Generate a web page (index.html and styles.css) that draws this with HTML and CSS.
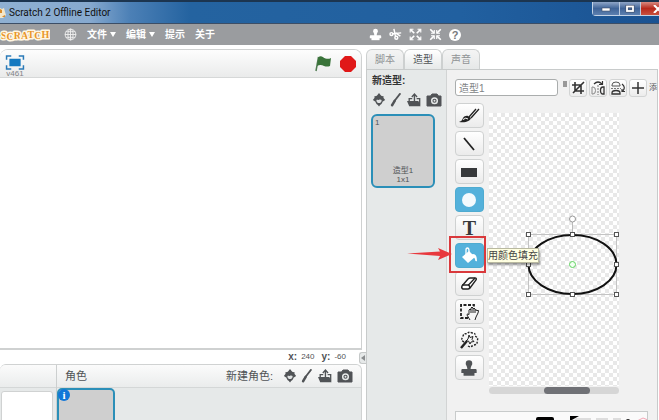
FILE: index.html
```html
<!DOCTYPE html>
<html lang="zh-CN">

<head>
    <meta charset="UTF-8">
    <meta name="viewport" content="width=device-width, initial-scale=1.0">
    <title>Scratch 2 Offline Editor</title>
    <link rel="stylesheet" href="styles.css">
</head>

<body>
    <!-- Icons used more than once -->
    <svg class="defs" aria-hidden="true">
        <symbol id="icon-sprite" viewBox="0 0 14 16">
            <path d="M7 0l2.500 3 3 1-.5 1.500L14 8l-3 2C10.500 12 9.500 13 8.500 13.500L7 15.500l-1.500-2C4.500 13 3.500 12 3 10L0 8l2-2.500L1.500 4l3-1z" fill="#505356"/>
            <path d="M4 8c1.500-.5 2 .3 3-.3s2-.5 3 .3c0 2.500-1.200 3.500-3 3.500S4.200 10.500 4 8z" fill="#dfe2e3"/>
        </symbol>
        <symbol id="icon-paint" viewBox="0 0 12 16">
            <path d="M10.500 1L4 9.500" stroke="#505356" stroke-width="2" stroke-linecap="round"/>
            <path d="M4.500 9L1.500 14" stroke="#505356" stroke-width="2.800" stroke-linecap="round"/>
        </symbol>
        <symbol id="icon-upload" viewBox="0 0 16 16">
            <path d="M8.500 9V2M5.500 4.500l3-3.200 3 3.200" fill="none" stroke="#505356" stroke-width="1.600"/>
            <path d="M2.500 9V6.500H6M11 6.500h3.500V14" fill="none" stroke="#505356" stroke-width="1.500"/>
            <path d="M0 9h13l2.500 6H2.500z" fill="#505356"/>
        </symbol>
        <symbol id="icon-camera" viewBox="0 0 16 14">
            <path d="M1 3h3.500L6 1h5l1.500 2H15v10H1z" fill="#505356" stroke="#505356" stroke-linejoin="round"/>
            <circle cx="8.500" cy="7.800" r="2.800" fill="#505356" stroke="#e6e9e9" stroke-width="1.500"/>
            <circle cx="8.500" cy="7.800" r="1" fill="#e6e9e9"/>
        </symbol>
        <symbol id="icon-stamp" viewBox="0 0 16 16">
            <path d="M8 1a3 3 0 0 1 3 3c0 1.500-1.500 2-1.500 5H14q1 0 1 1v2.500H1V10q0-1 1-1h4.500c0-3-1.500-3.500-1.500-5a3 3 0 0 1 3-3z"/>
            <path d="M3 12h10v3H3z"/>
        </symbol>
    </svg>

    <header class="title-bar">
        <svg class="app-icon" viewBox="0 0 6 12">
            <path d="M0 1l2 1 2-1 1 4 1 3-3 3H0z" fill="#f5e6c8"/>
            <path d="M0 2l2 1v3H0zM3 9l2-1v2H2z" fill="#d98b2b"/>
        </svg>
        <span class="window-title">Scratch 2 Offline Editor</span>
        <div class="window-buttons">
            <button class="win-btn" aria-label="Minimize"><svg viewBox="0 0 10 8"><rect x="1" y="3" width="8" height="3" fill="#fff" stroke="#43506a" stroke-width=".6"/></svg></button>
            <button class="win-btn" aria-label="Maximize"><svg viewBox="0 0 10 8"><rect x="2" y="1.500" width="6" height="4.500" fill="none" stroke="#43506a" stroke-width="3"/><rect x="2" y="1.500" width="6" height="4.500" fill="none" stroke="#fff" stroke-width="1.800"/></svg></button>
            <button class="win-btn close" aria-label="Close"><svg viewBox="0 0 10 8"><path d="M1 0l8 8M9 0L1 8" stroke="#fff" stroke-width="2"/></svg></button>
        </div>
    </header>

    <nav class="menu-bar">
        <svg class="logo" viewBox="0 0 50 20" role="img" aria-label="Scratch">
            <text x="1" y="14" dy="0 1 -1 0 -1 1 -1">SCRATCH</text>
        </svg>
        <button class="menu globe" aria-label="Language">
            <svg viewBox="0 0 14 14" fill="none" stroke="#eee">
                <circle cx="7" cy="7" r="5.800"/>
                <ellipse cx="7" cy="7" rx="2.800" ry="5.800"/>
                <path d="M7 1v12M1 7h12M2 4h10M2 10h10"/>
            </svg>
        </button>
        <button class="menu">文件<span class="caret"></span></button>
        <button class="menu">编辑<span class="caret"></span></button>
        <button class="menu">提示</button>
        <button class="menu">关于</button>
        <div class="cursor-tools">
            <button aria-label="Duplicate"><svg viewBox="0 0 16 16" fill="#fff"><use href="#icon-stamp"/></svg></button>
            <button aria-label="Delete"><svg viewBox="0 0 16 16" fill="none" stroke="#fff" stroke-width="1.800"><path d="M6 1l2 9M4 7l11-1"/><circle cx="3" cy="7.500" r="1.800"/><circle cx="9" cy="12" r="1.800"/><path d="M8 6l6 4"/></svg></button>
            <button aria-label="Grow"><svg viewBox="0 0 16 16" fill="none" stroke="#fff" stroke-width="2"><path d="M6.500 6.500L2 2M9.500 6.500L14 2M6.500 9.500L2 14M9.500 9.500L14 14"/><path d="M1.500 5.500v-4h4M10.500 1.500h4v4M1.500 10.500v4h4M10.500 14.500h4v-4" stroke-width="1.400"/></svg></button>
            <button aria-label="Shrink"><svg viewBox="0 0 16 16" fill="none" stroke="#fff" stroke-width="2"><path d="M6 6L1.500 1.500M10 6l4.500-4.500M6 10l-4.500 4.500M10 10l4.500 4.500"/><path d="M2.500 6.500h4v-4M9.500 2.500v4h4M2.500 9.500h4v4M9.500 13.500v-4h4" stroke-width="1.400"/></svg></button>
            <button class="help" aria-label="Help">?</button>
        </div>
    </nav>

    <main class="workspace">
        <div class="left-column">
            <section class="stage">
                <div class="stage-header">
                    <button class="fullscreen">
                        <svg viewBox="0 0 20 16">
                            <path d="M1 5V1h5M14 1h5v4M19 11v4h-5M6 15H1v-4" fill="none" stroke="#2a7ab8" stroke-width="1.600"/>
                            <rect x="4" y="4" width="12" height="8" fill="#1378c0"/>
                        </svg>
                        <span>v461</span>
                    </button>
                    <button class="flag" aria-label="Go">
                        <svg viewBox="0 0 18 18">
                            <path d="M3.500 2L1 16" stroke="#4d7a50" stroke-width="1.500"/>
                            <path d="M3.500 2c3-2 5 1 7 1.500S14 4 16 3l-1 8c-2 .8-4 .8-6 0s-4-1.500-7 0z" fill="#397339"/>
                        </svg>
                    </button>
                    <button class="stop" aria-label="Stop">
                        <svg viewBox="0 0 16 16"><path d="M5 0h6l5 5v6l-5 5H5l-5-5V5z" fill="#e01818"/></svg>
                    </button>
                </div>
                <div class="stage-canvas"></div>
            </section>
            <div class="mouse-pos">
                <b>x:</b><span>240</span><b>y:</b><span>-60</span>
            </div>
            <section class="sprites">
                <div class="backdrop-column">
                    <div class="pane-header"></div>
                    <div class="backdrop-thumb"></div>
                </div>
                <div class="sprite-column">
                    <div class="pane-header">
                        <span>角色</span>
                        <span class="new-label">新建角色:</span>
                        <div class="new-buttons">
                            <button aria-label="从角色库中选取"><svg class="w14"><use href="#icon-sprite"/></svg></button>
                            <button aria-label="绘制新角色"><svg class="w12"><use href="#icon-paint"/></svg></button>
                            <button aria-label="上传角色"><svg class="w16"><use href="#icon-upload"/></svg></button>
                            <button aria-label="拍摄照片"><svg class="w16"><use href="#icon-camera"/></svg></button>
                        </div>
                    </div>
                    <div class="sprite-thumb">
                        <button class="info" aria-label="信息">i</button>
                    </div>
                </div>
            </section>
        </div>

        <div class="divider">
            <button class="collapse" aria-label="收起"></button>
        </div>

        <div class="right-column">
            <div class="tabs">
                <button class="tab">脚本</button>
                <button class="tab active">造型</button>
                <button class="tab">声音</button>
            </div>
            <div class="panel">
                <aside class="costumes">
                    <h2>新造型:</h2>
                    <div class="new-buttons">
                        <button aria-label="从造型库中选取"><svg class="w14"><use href="#icon-sprite"/></svg></button>
                        <button aria-label="绘制新造型"><svg class="w12"><use href="#icon-paint"/></svg></button>
                        <button aria-label="上传造型"><svg class="w16"><use href="#icon-upload"/></svg></button>
                        <button aria-label="拍摄照片"><svg class="w16"><use href="#icon-camera"/></svg></button>
                    </div>
                    <div class="costume">
                        <span class="index">1</span>
                        <span class="name">造型1</span>
                        <span class="size">1x1</span>
                    </div>
                </aside>

                <section class="editor">
                    <div class="editor-top">
                        <input class="costume-name" type="text" value="造型1" aria-label="造型名称">
                        <div class="undo-stub"></div>
                        <button class="edit-btn" aria-label="裁剪"><svg viewBox="0 0 16 16" fill="none" stroke="#333" stroke-width="1.600"><path d="M5 2v9h9M2 5h9v9M3 13L14 2"/></svg></button>
                        <button class="edit-btn" aria-label="左右翻转"><svg viewBox="0 0 16 16" fill="none" stroke="#333"><path d="M2 7h1q2.500 0 2.500 3.500T3 14H2z" stroke="#888"/><path d="M8 5v10" stroke="#777" stroke-dasharray="2 1"/><path d="M14 7h-1q-2.500 0-2.500 3.500T13 14h1z" stroke-width="1.300"/><path d="M4 4q4-4 8 0M12.500 1v3.500H9" stroke-width="1.200"/></svg></button>
                        <button class="edit-btn" aria-label="上下翻转"><svg viewBox="0 0 16 16" fill="none" stroke="#333"><path d="M2 6V5q0-3 4-3t4 3v1z" stroke="#555"/><path d="M1 8.500h10" stroke="#777" stroke-dasharray="2 1"/><path d="M2 14v-1q0-2.500 4-2.500t4 2.500v1z" stroke-width="1.300"/><path d="M12 4q4 3 1 7M15 11.500h-3V9" stroke-width="1.200"/></svg></button>
                        <button class="edit-btn" aria-label="设置造型中心"><svg viewBox="0 0 16 16" stroke="#333" stroke-width="1.500"><path d="M8 2v12M2 8h12"/></svg></button>
                        <button class="add-btn">添</button>
                    </div>

                    <div class="paint-area">
                        <div class="tools">
                            <button class="tool" aria-label="画笔"><svg viewBox="0 0 24 20"><path d="M19 3l-7 8M22 3l-8 9" stroke="#222" stroke-width="1.300"/><path d="M11 10l3 2c-1 3-5 5-12 4 3-1 3-2 4-4 1-1.500 3-2.500 5-2z" fill="#222"/><path d="M6 13.500q3-2.500 5-.5" stroke="#fff" fill="none"/></svg></button>
                            <button class="tool" aria-label="线段"><svg viewBox="0 0 24 20"><path d="M7 4l10 12" stroke="#222" stroke-width="1.800"/></svg></button>
                            <button class="tool" aria-label="矩形"><svg viewBox="0 0 24 20"><rect x="4" y="6" width="16" height="9" fill="#37393b"/></svg></button>
                            <button class="tool selected" aria-label="椭圆"><svg viewBox="0 0 24 20"><circle cx="12" cy="10" r="7" fill="#f4fafd"/></svg></button>
                            <button class="tool text-tool" aria-label="文本">T</button>
                            <div class="tool-hint">
                                <button class="tool selected" aria-describedby="fill-tip" aria-label="用颜色填充"><svg viewBox="0 0 24 20"><path d="M5 11l7-6 6 6-7 6z" fill="#fff"/><path d="M9 9V4q0-2 1.500-2T12 5v3" fill="none" stroke="#fff" stroke-width="1.300"/><path d="M15 8q5-1 5 7-2 1-2-2l-2-3z" fill="#fff"/></svg></button>
                                <div class="marker"></div>
                                <svg class="arrow" viewBox="0 0 46 14"><path d="M0 6.500l33-2-2-3.500 14 6-14 6 2-4z" fill="#e8383d"/></svg>
                                <div class="tooltip" id="fill-tip" role="tooltip">用颜色填充</div>
                            </div>
                            <button class="tool" aria-label="擦除"><svg viewBox="0 0 24 20"><path d="M5 12l6-7q1-1 2-1h5q2 0 1 2l-6 8q-1 1-2 1H6q-2-1-1-3z" fill="#fff" stroke="#222" stroke-width="1.400"/><path d="M5 11h6q2 0 1.500 3.500M11.500 11L18 4" fill="none" stroke="#222" stroke-width="1.300"/></svg></button>
                            <button class="tool" aria-label="选择"><svg viewBox="0 0 24 20" fill="none" stroke="#222"><path d="M11 16H4V3h13v3" stroke-width="1.800" stroke-dasharray="3 1.500"/><path d="M13 18l-3-5q0-2 2-.5V8q1-2 2 0V6q1-2 2 0v1q1-2 2 0v1q1.500-1 2 1l1-1q1 0 0 3l-2 4-1 3" fill="#f5f5f5"/><path d="M14 8v3M16 7v4M18 8v3"/></svg></button>
                            <button class="tool" aria-label="移除背景"><svg viewBox="0 0 24 20" fill="none" stroke="#222"><path d="M7 12q-4-2-1-5 0-4 4-3 2-3 5-1 4 0 3 3 4 2 2 5 1 4-4 4-2 3-5 1" stroke-width="1.400" stroke-dasharray="2 1.300"/><path d="M4 18l6-7" stroke-width="2.400"/><path d="M12 5l1 2.500 3-1-1 3 2 2-3 .5-1 2-1.500-3-2.500 0 2-2z"/></svg></button>
                            <button class="tool" aria-label="复制"><svg viewBox="0 0 16 16" fill="#505356"><use href="#icon-stamp" x="1" y="1" width="14" height="14"/></svg></button>
                        </div>
                        <div class="canvas-column">
                            <div class="canvas">
                                <svg class="selection" viewBox="0 0 96 86" fill="none">
                                    <path d="M48.500 8v13" stroke="#bbb"/>
                                    <rect x="4.500" y="20.500" width="88" height="60" stroke="#c4c4c4"/>
                                    <ellipse cx="48.500" cy="50.500" rx="44" ry="29.500" stroke="#111" stroke-width="2"/>
                                    <circle cx="48.500" cy="5" r="3" fill="#fff" stroke="#999"/>
                                    <circle cx="48.500" cy="50.500" r="3" fill="#f3fff3" stroke="#5fd35f"/>
                                    <g fill="#fff" stroke="#555">
                                        <rect x="2.500" y="18.500" width="4" height="4"/>
                                        <rect x="46.500" y="18.500" width="4" height="4"/>
                                        <rect x="90.500" y="18.500" width="4" height="4"/>
                                        <rect x="2.500" y="48.500" width="4" height="4"/>
                                        <rect x="90.500" y="48.500" width="4" height="4"/>
                                        <rect x="2.500" y="78.500" width="4" height="4"/>
                                        <rect x="46.500" y="78.500" width="4" height="4"/>
                                        <rect x="90.500" y="78.500" width="4" height="4"/>
                                    </g>
                                </svg>
                            </div>
                            <div class="scrollbar"><div class="thumb"></div></div>
                        </div>
                    </div>

                    <div class="palette">
                        <svg viewBox="0 0 194 9">
                            <path d="M80 9V7q0-2 2-2h14q2 0 2 2v2z" fill="#000"/>
                            <path d="M114 4h9l-9 5z" fill="#000"/>
                            <path d="M119 7h16M140 7h12M157 7h8" stroke="#ddd" stroke-width="2"/>
                            <path d="M169 9q3-4 6 0z" fill="#222"/>
                            <path d="M181 9l6-3 5 2" stroke="#f3a5b5" fill="none"/>
                        </svg>
                    </div>
                </section>
            </div>
        </div>
    </main>
</body>

</html>
```

FILE: styles.css
```css
* {
    box-sizing: border-box;
}

body {
    margin: 0;
    height: 100vh;
    display: flex;
    flex-direction: column;
    overflow: hidden;
    background: #fff;
    color: #505356;
    font: 11px/16px "Liberation Sans", "Noto Sans CJK SC", sans-serif;
}

button {
    display: flex;
    align-items: center;
    justify-content: center;
    padding: 0;
    border: 0;
    background: none;
    color: inherit;
    font: inherit;
}

svg {
    display: block;
    flex: none;
}

.defs {
    position: absolute;
    width: 0;
    height: 0;
}

/* Window title */
.title-bar {
    flex: none;
    display: flex;
    align-items: center;
    gap: 3px;
    height: 24px;
    border-top: 2px solid #1c3550;
    border-bottom: 1px solid #3c4e66;
    background: linear-gradient(90deg, #8fb0d2 0, #86a9cf 90px, #4c80b6 130px, #2463a0 190px, #2160a0 70%, #1a5292 100%);
}

.app-icon {
    width: 6px;
    height: 12px;
}

.window-title {
    flex: 1;
    color: #111;
    font: 10px/16px Roboto, sans-serif;
}

.window-buttons {
    align-self: flex-start;
    display: flex;
    margin-right: -16px;
    border: 1px solid #c3d3e6;
    border-top: 0;
    border-radius: 0 0 4px 4px;
}

.win-btn {
    width: 21px;
    height: 13px;
    border-right: 1px solid #bccbe0;
    background: linear-gradient(#8fa6c8, #3f6498 50%, #5d80b0);
}

.win-btn:first-child {
    width: 27px;
}

.win-btn.close {
    width: 33px;
    border-right: 0;
    background: linear-gradient(#d88a80, #b8291c 50%, #c9513f);
}

.win-btn svg {
    width: 10px;
    height: 8px;
}

/* Menu */
.menu-bar {
    flex: none;
    display: flex;
    align-items: center;
    height: 21px;
    background: #9a9c9f;
    color: #fff;
}

.logo {
    width: 50px;
    height: 20px;
}

.logo text {
    fill: #e8962a;
    stroke: #fff6e2;
    stroke-width: 3px;
    stroke-linejoin: round;
    paint-order: stroke;
    font: bold 10px "Liberation Serif", serif;
}

.menu {
    gap: 3px;
    margin-right: 10px;
    font-weight: bold;
    font-size: 10px;
}

.menu.globe {
    margin: 0 10px 0 14px;
}

.globe svg {
    width: 13px;
    height: 13px;
}

.caret {
    border: 3px solid transparent;
    border-top: 5px solid #fff;
    border-bottom: 0;
}

.cursor-tools {
    display: flex;
    align-items: center;
    gap: 7px;
    margin-left: 144px;
}

.cursor-tools svg {
    width: 13px;
    height: 13px;
}

.help {
    width: 12px;
    height: 12px;
    border-radius: 50%;
    background: #fff;
    color: #77797c;
    font-weight: bold;
    line-height: 12px;
}

/* Workspace */
.workspace {
    flex: 1;
    min-height: 0;
    display: flex;
    padding-top: 4px;
}

.left-column {
    flex: 21 1 0;
    display: flex;
    flex-direction: column;
}

.stage {
    flex: 1;
    display: flex;
    flex-direction: column;
    border: 1px solid #cfd1d1;
    border-left: 0;
    border-bottom-width: 2px;
    border-radius: 8px 8px 0 0;
    overflow: hidden;
}

.stage-header {
    display: flex;
    align-items: center;
    height: 28px;
    padding: 0 5px;
    border-bottom: 1px solid #d6d8d8;
    background: linear-gradient(#fdfdfd, #eaebeb);
}

.fullscreen {
    flex-direction: column;
    padding-top: 5px;
    color: #808386;
    font-size: 8px;
    line-height: 8px;
}

.fullscreen svg {
    width: 20px;
    height: 15px;
}

.flag {
    margin-left: auto;
    margin-right: 7px;
}

.flag svg {
    width: 18px;
    height: 18px;
}

.stop svg {
    width: 16px;
    height: 16px;
}

.stage-canvas {
    flex: 1;
    background: #fff;
}

.mouse-pos {
    display: flex;
    justify-content: flex-end;
    gap: 4px;
    padding-right: 16px;
    font-size: 8px;
    line-height: 14px;
}

.mouse-pos b {
    font-size: 10px;
    margin-left: 3px;
}

.sprites {
    flex: none;
    display: flex;
    height: 56px;
    border: 1px solid #d0d2d2;
    border-width: 1px 1px 0 0;
    border-radius: 6px 6px 0 0;
    background: #e6e9e9;
    overflow: hidden;
}

.backdrop-column {
    flex: none;
    width: 57px;
    border-right: 1px solid #cccfcf;
}

.pane-header {
    display: flex;
    align-items: center;
    height: 23px;
    padding: 0 8px;
    border-bottom: 1px solid #d4d7d7;
    background: linear-gradient(#fbfbfb, #eaecec);
}

.backdrop-thumb {
    height: 40px;
    margin: 3px 3px 0 1px;
    border: 1px solid #d0d2d2;
    border-radius: 3px;
    background: #fff;
}

.sprite-column {
    flex: 1;
}

.new-label {
    margin-left: auto;
    margin-right: 10px;
}

.new-buttons {
    display: flex;
    align-items: center;
    gap: 4px;
}

.new-buttons svg {
    height: 14px;
}

.w12 {
    width: 12px;
}

.w14 {
    width: 14px;
}

.w16 {
    width: 16px;
}

.sprite-thumb {
    width: 58px;
    height: 60px;
    border: 2px solid #2b8fb8;
    border-radius: 5px;
    background: #cfcfcf;
}

.info {
    width: 12px;
    height: 12px;
    margin: -1px;
    border-radius: 50%;
    background: #1277d8;
    color: #fff;
    font: bold 11px/12px "Liberation Serif", serif;
}

.divider {
    flex: none;
    display: flex;
    align-items: flex-end;
    width: 4px;
    padding-bottom: 56px;
}

.collapse {
    flex: none;
    width: 7px;
    height: 12px;
    margin-left: -3px;
    border: 1px solid #c5c8c8;
    border-right: 0;
    border-radius: 3px 0 0 3px;
    background: #e6e9e9;
}

.collapse::before {
    content: "";
    border: 3px solid transparent;
    border-right: 4px solid #8a8d8f;
    border-left: 0;
}

/* Tabs */
.right-column {
    flex: 17 1 0;
    display: flex;
    flex-direction: column;
    min-width: 0;
}

.tabs {
    display: flex;
    height: 20px;
}

.tab {
    width: 38px;
    border: 1px solid #cdd0d0;
    border-bottom: 0;
    border-radius: 6px 6px 0 0;
    background: linear-gradient(#f4f4f4, #e6e8e8);
    color: #909395;
    font-size: 10px;
}

.tab.active {
    background: linear-gradient(#fff, #e6e9e9);
    color: #505356;
}

.panel {
    flex: 1;
    min-height: 0;
    display: flex;
    margin-right: 1px;
    border: 1px solid #c8cbcb;
    border-bottom: 0;
    background: #e6e9e9;
    overflow: hidden;
}

.costumes {
    flex: none;
    width: 79px;
    padding: 3px 4px;
}

.costumes h2 {
    margin: 0 0 4px 1px;
    font-size: 10px;
    line-height: 16px;
    color: #333;
}

.costumes .new-buttons {
    padding-left: 1px;
}

.costume {
    display: flex;
    flex-direction: column;
    align-items: center;
    width: 64px;
    height: 74px;
    margin-top: 7px;
    padding: 2px;
    border: 2px solid #2b8fb8;
    border-radius: 6px;
    background: #cfcfcf;
}

.costume .index {
    align-self: flex-start;
    font-size: 8px;
    line-height: 10px;
}

.costume .name {
    margin-top: auto;
    font-size: 8px;
    line-height: 10px;
}

.costume .size {
    font-size: 8px;
    line-height: 8px;
}

/* Paint editor */
.editor {
    flex: 1;
    min-width: 0;
    display: flex;
    flex-direction: column;
    padding: 9px 0 0 8px;
    border-left: 1px solid #d2d4d4;
    background: #f1f1f1;
}

.editor-top {
    flex: none;
    display: flex;
    gap: 2px;
    height: 18px;
}

.costume-name {
    flex: none;
    width: 103px;
    height: 17px;
    padding: 0 3px;
    border: 1px solid #aaadad;
    border-radius: 3px;
    background: #fff;
    color: #808386;
    font: inherit;
    font-size: 10px;
}

.undo-stub {
    flex: none;
    width: 4px;
    height: 6px;
    margin-top: 2px;
    margin-left: 3px;
    background: #999;
}

.edit-btn {
    flex: none;
    width: 18px;
    height: 18px;
    border: 1px solid #d2d4d4;
    border-radius: 3px;
    background: linear-gradient(#fff, #ececec);
}

.edit-btn svg {
    width: 16px;
    height: 16px;
}

.add-btn {
    flex: none;
    font-size: 8px;
}

.paint-area {
    flex: 1;
    min-height: 0;
    display: flex;
    gap: 5px;
    padding: 6px 38px 0 0;
}

.tools {
    flex: none;
    display: flex;
    flex-direction: column;
    gap: 3px;
}

.tool {
    flex: none;
    width: 29px;
    height: 25px;
    border: 1px solid #cfd1d1;
    border-radius: 4px;
    background: linear-gradient(#fff, #ebebeb);
}

.tool.selected {
    border-color: #4fabd0;
    background: #54b1db;
}

.tool svg {
    width: 24px;
    height: 20px;
}

.text-tool {
    color: #37393b;
    font: bold 20px/20px "Liberation Serif", serif;
}

.tool-hint {
    position: relative;
}

.marker {
    position: absolute;
    inset: -7px -2px -5px -6px;
    border: 2px solid #d9393c;
}

.arrow {
    position: absolute;
    right: 31px;
    top: 4px;
    width: 46px;
    height: 14px;
}

.tooltip {
    position: absolute;
    left: 32px;
    top: 5px;
    z-index: 1;
    border: 1px solid #b9b9a0;
    background: #ffffe1;
    box-shadow: 1px 2px 2px rgba(0, 0, 0, 0.4);
    color: #444;
    font-size: 10px;
    line-height: 13px;
    white-space: nowrap;
}

.canvas-column {
    flex: 1;
    display: flex;
    flex-direction: column;
    padding-top: 10px;
}

.canvas {
    position: relative;
    flex: 1;
    background: repeating-conic-gradient(#e8e8e8 0 25%, #fff 0 50%) 0 0 / 8px 8px;
}

.selection {
    position: absolute;
    left: 35px;
    top: 101px;
    width: 96px;
    height: 86px;
}

.scrollbar {
    height: 7px;
    margin-top: 1px;
    border-radius: 4px;
    background: #d6d6d6;
}

.thumb {
    width: 36%;
    height: 7px;
    margin-left: 42%;
    border-radius: 4px;
    background: #707176;
}

.palette {
    flex: none;
    height: 9px;
    margin: 17px 9px 0 0;
    border: 1px solid #c8cbcb;
    border-bottom: 0;
    background: #fafafa;
    overflow: hidden;
}

.palette svg {
    width: 194px;
    height: 9px;
}
```
